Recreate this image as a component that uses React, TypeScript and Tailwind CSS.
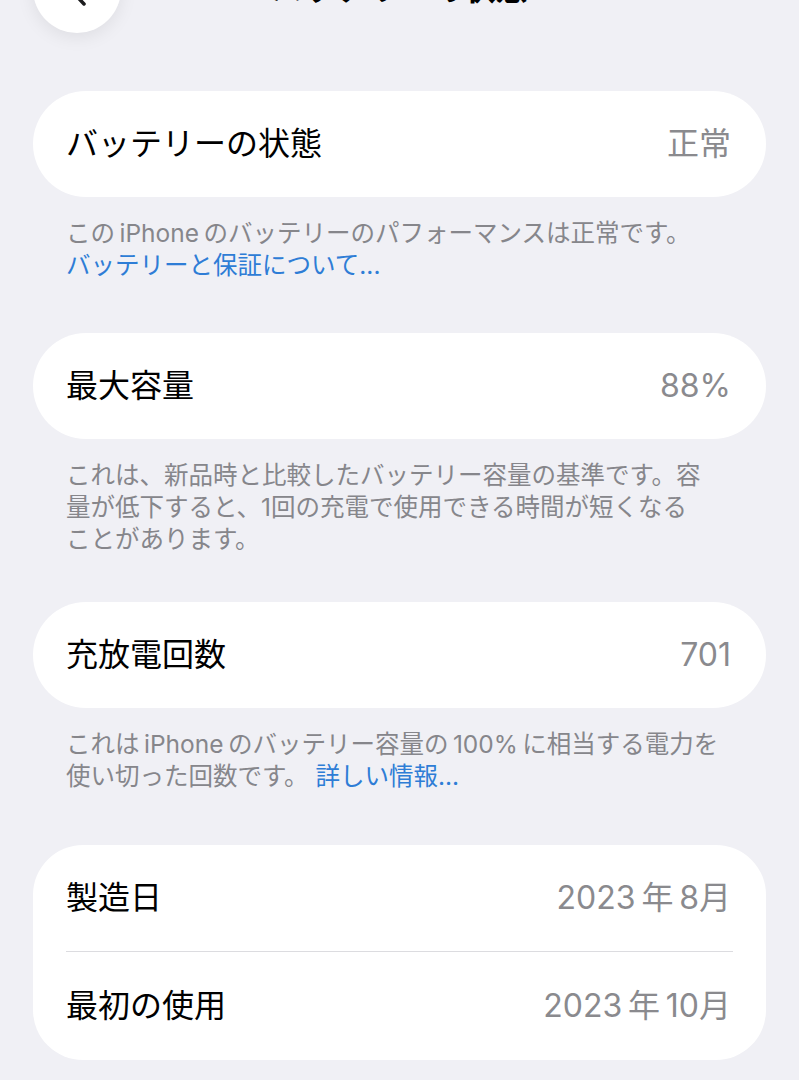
const font = { fontFamily: '"Inter", "Noto Sans CJK JP", sans-serif' }

function Row({ label, value }: { label: string; value: string }) {
  return (
    <div className="flex h-[106px] items-center justify-between pl-[33px] pr-[35px]">
      <span className="text-[32px] text-black">{label}</span>
      <span className="text-[32px] text-[#8a8a8e]">{value}</span>
    </div>
  )
}

function Footer({ children }: { children: React.ReactNode }) {
  return (
    <p className="mx-[33px] mt-[20px] whitespace-nowrap px-[33px] text-[24.5px] leading-[32px] text-[#86868b]">
      {children}
    </p>
  )
}

export default function App() {
  return (
    <div className="min-h-screen overflow-hidden bg-[#f0f0f5] pb-10" style={font}>
      {/* Nav bar (mostly scrolled off) */}
      <div className="-mt-[55px] grid h-[88px] grid-cols-[88px_1fr_88px] items-center px-[33px]">
        <div className="flex h-[88px] w-[88px] items-center justify-center rounded-full bg-white shadow-[0_4px_18px_rgba(0,0,0,0.08)]">
          <svg width="22" height="36" viewBox="0 0 22 36" fill="none">
            <path d="M18 3 L4 18 L18 33" stroke="#1c1c1e" strokeWidth="3.5" strokeLinecap="round" strokeLinejoin="round" />
          </svg>
        </div>
        <div className="text-center text-[32px] font-semibold text-black">バッテリーの状態</div>
        <div />
      </div>

      {/* Battery health */}
      <div className="mx-[33px] mt-[58px] rounded-[53px] bg-white">
        <Row label="バッテリーの状態" value="正常" />
      </div>
      <Footer>
        この{'\u2009'}iPhone{'\u2009'}のバッテリーのパフォーマンスは正常です。
        <br />
        <span className="text-[#2e7dd6]">バッテリーと保証について...</span>
      </Footer>

      {/* Max capacity */}
      <div className="mx-[33px] mt-[52px] rounded-[53px] bg-white">
        <Row label="最大容量" value="88%" />
      </div>
      <Footer>
        これは、新品時と比較したバッテリー容量の基準です。容
        <br />
        量が低下すると、1回の充電で使用できる時間が短くなる
        <br />
        ことがあります。
      </Footer>

      {/* Cycle count */}
      <div className="mx-[33px] mt-[47px] rounded-[53px] bg-white">
        <Row label="充放電回数" value="701" />
      </div>
      <Footer>
        これは{'\u2009'}iPhone{'\u2009'}のバッテリー容量の{'\u2009'}100%{'\u2009'}に相当する電力を
        <br />
        使い切った回数です。 <span className="text-[#2e7dd6]">詳しい情報...</span>
      </Footer>

      {/* Dates */}
      <div className="mx-[33px] mt-[53px] rounded-[50px] bg-white">
        <Row label="製造日" value={'2023\u2009年\u20098月'} />
        <div className="mx-[33px] h-px bg-[#dcdce0]" />
        <div className="flex h-[108px] items-center justify-between pl-[33px] pr-[35px]">
          <span className="text-[32px] text-black">最初の使用</span>
          <span className="text-[32px] text-[#8a8a8e]">{'2023\u2009年\u200910月'}</span>
        </div>
      </div>
    </div>
  )
}
